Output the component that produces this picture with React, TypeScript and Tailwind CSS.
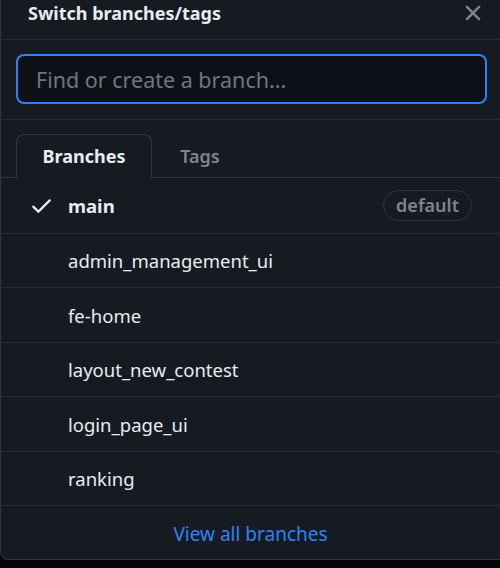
import React, { useState } from "react";

const branches = [
  "main",
  "admin_management_ui",
  "fe-home",
  "layout_new_contest",
  "login_page_ui",
  "ranking",
];

const CheckIcon = () => (
  <svg viewBox="0 0 16 16" width="25" height="25" fill="currentColor">
    <path d="M13.78 4.22a.75.75 0 0 1 0 1.06l-7.25 7.25a.75.75 0 0 1-1.06 0L2.22 9.28a.751.751 0 0 1 .018-1.042.751.751 0 0 1 1.042-.018L6 10.94l6.72-6.72a.75.75 0 0 1 1.06 0Z" />
  </svg>
);

const XIcon = () => (
  <svg viewBox="0 0 16 16" width="26" height="26" fill="currentColor">
    <path d="M3.72 3.72a.75.75 0 0 1 1.06 0L8 6.94l3.22-3.22a.749.749 0 0 1 1.275.326.749.749 0 0 1-.215.734L9.06 8l3.22 3.22a.749.749 0 0 1-.326 1.275.749.749 0 0 1-.734-.215L8 9.06l-3.22 3.22a.751.751 0 0 1-1.042-.018.751.751 0 0 1-.018-1.042L6.94 8 3.72 4.78a.75.75 0 0 1 0-1.06Z" />
  </svg>
);

export default function App() {
  const [query, setQuery] = useState("");
  const [tab, setTab] = useState<"branches" | "tags">("branches");

  return (
    <div
      className="h-[568px] w-[500px] overflow-hidden bg-[#010409]"
      style={{ fontFamily: '"Noto Sans", "Open Sans", sans-serif' }}
    >
      <div className="flex h-[560px] flex-col rounded-bl-lg border-b border-l border-[#30363d] bg-[#161b22]">
        {/* Header */}
        <div className="flex h-[40px] shrink-0 items-center justify-between border-b border-[#262c35] pl-[27px] pr-[14px]">
          <h2 className="-mt-[13px] text-[18px] font-bold text-[#e6edf3]">
            Switch branches/tags
          </h2>
          <button className="-mt-[13px] text-[#7d8590]">
            <XIcon />
          </button>
        </div>

        {/* Filter */}
        <div className="shrink-0 border-b border-[#262c35] px-[15px] pb-[15px] pt-[14px]">
          <input
            value={query}
            onChange={(e) => setQuery(e.target.value)}
            placeholder="Find or create a branch..."
            className="h-[50px] w-[471px] rounded-lg border-2 border-[#2f81f7] bg-[#0d1117] px-[18px] text-[21.5px] text-[#e6edf3] outline-none placeholder:text-[#6e7681]"
          />
        </div>

        {/* Tabs */}
        <div className="flex h-[58px] shrink-0 items-end border-b border-[#30363d] pl-[15px]">
          <button
            onClick={() => setTab("branches")}
            className={`-mb-px h-[44px] w-[136px] rounded-t-lg text-[18px] font-bold ${
              tab === "branches"
                ? "border border-b-0 border-[#30363d] bg-[#161b22] text-[#e6edf3]"
                : "text-[#7d8590]"
            }`}
          >
            Branches
          </button>
          <button
            onClick={() => setTab("tags")}
            className={`-mb-px h-[44px] w-[96px] rounded-t-lg text-[18px] font-semibold ${
              tab === "tags"
                ? "border border-b-0 border-[#30363d] bg-[#161b22] text-[#e6edf3]"
                : "text-[#7d8590]"
            }`}
          >
            Tags
          </button>
        </div>

        {/* Branch list */}
        <div className="flex flex-col">
          {branches.map((b, i) => (
            <div
              key={b}
              className={`flex h-[54.5px] items-center pr-[28px] ${
                i > 0 ? "border-t border-[#262c35]" : ""
              }`}
            >
              <span className="flex w-[67px] justify-end pr-[14px] text-[#e6edf3]">
                {i === 0 && <CheckIcon />}
              </span>
              <span
                className={`mt-[2px] flex-1 text-[18.5px] text-[#e6edf3] ${
                  i === 0 ? "font-bold" : ""
                }`}
              >
                {b}
              </span>
              {i === 0 && (
                <span className="flex h-[31px] items-center rounded-full border border-[#30363d] px-[12px] text-[18px] font-semibold text-[#7d8590]">
                  default
                </span>
              )}
            </div>
          ))}
        </div>

        {/* Footer */}
        <div className="flex flex-1 items-center justify-center border-t border-[#262c35] pt-[3px]">
          <a href="#" className="text-[19px] text-[#2f81f7]">
            View all branches
          </a>
        </div>
      </div>
    </div>
  );
}
